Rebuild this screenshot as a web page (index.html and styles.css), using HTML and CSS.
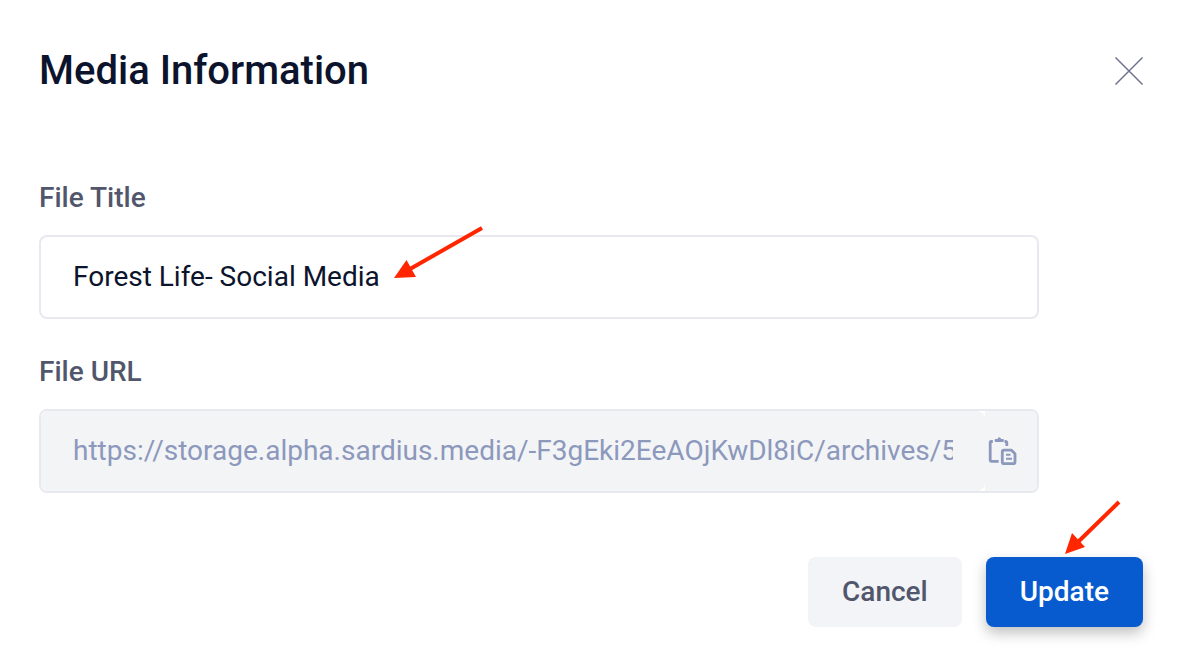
FILE: index.html
```html
<!DOCTYPE html>
<html lang="en">
<head>
    <meta charset="UTF-8">
    <meta name="viewport" content="width=device-width, initial-scale=1.0">
    <title>Media Information</title>
    <link rel="stylesheet" href="styles.css">
</head>
<body>
    <div class="modal">
        <header class="modal-header">
            <h1>Media Information</h1>
            <button class="close-btn" type="button" aria-label="Close">
                <svg width="30" height="30" viewBox="0 0 30 30">
                    <path d="M1.5 1.5l27 27M28.5 1.5l-27 27" />
                </svg>
            </button>
        </header>

        <form class="modal-form">
            <div class="field">
                <label for="fileTitle">File Title</label>
                <div class="input-box">
                    <input type="text" id="fileTitle" value="Forest Life- Social Media">
                    <svg class="arrow arrow-title" width="92" height="54" viewBox="0 0 92 54">
                        <path class="shaft" d="M90 2L18 43" />
                        <path class="head" d="M2 52l12.500-18 9.500 17z" />
                    </svg>
                </div>
            </div>

            <div class="field">
                <label for="fileUrl">File URL</label>
                <div class="input-box">
                    <input type="text" id="fileUrl" value="https://storage.alpha.sardius.media/-F3gEki2EeAOjKwDl8iC/archives/5" disabled>
                    <button class="copy-btn" type="button" aria-label="Copy URL">
                        <svg width="30" height="30" viewBox="0 0 30 30">
                            <path class="line" d="M4.800 5.500H3.200q-1 0-1 1v17.800q0 1 1 1h7.500" />
                            <path class="line" d="M16.500 5.500h.8q1.500 0 1.500 1.500v3" />
                            <path class="solid" d="M7.500 3h2q.2-1.800 1.700-1.800T13 3h2q.8 0 .8.800v1.400q0 .8-.8.800H7.500q-.8 0-.8-.8V3.800q0-.8.8-.8z" />
                            <path class="line" d="M16 14.200h7.500l3.500 3.500v8.300q0 1.700-1.700 1.700H16q-1.700 0-1.700-1.700V15.900q0-1.700 1.700-1.700z" />
                            <path class="line thin" d="M18 18.700h4.500M18 22.700h6" />
                        </svg>
                    </button>
                </div>
            </div>

            <div class="actions">
                <button class="btn cancel-btn" type="button">Cancel</button>
                <button class="btn update-btn" type="submit">
                    Update
                    <svg class="arrow arrow-update" width="58" height="56" viewBox="0 0 58 56">
                        <path class="shaft" d="M55 2L14 42" />
                        <path class="head" d="M1 54l7-21 13 14z" />
                    </svg>
                </button>
            </div>
        </form>
    </div>
</body>
</html>
```

FILE: styles.css
```css
* {
    box-sizing: border-box;
    margin: 0;
    padding: 0;
}

body {
    font-family: Roboto, sans-serif;
    font-size: 28px;
    line-height: 32px;
    color: #0c132c;
    background-color: #fff;
}

.modal {
    padding: 47px 43px 24px 39px;
}

.modal-header {
    display: flex;
    justify-content: space-between;
    align-items: center;
    margin-bottom: 87px;
}

h1 {
    font-size: 40px;
    line-height: 48px;
    font-weight: 500;
}

button {
    border: none;
    font-family: inherit;
    cursor: pointer;
}

button svg {
    display: block;
}

.close-btn {
    background: none;
    margin-right: -1px;
}

.close-btn path {
    stroke: #70738f;
    stroke-width: 1.5;
}

.modal-form {
    display: flex;
    flex-direction: column;
    gap: 37px;
}

.field {
    display: flex;
    flex-direction: column;
    gap: 21px;
    max-width: 1000px;
}

label {
    color: #51566c;
    font-weight: 500;
}

.input-box {
    position: relative;
    display: flex;
    height: 84px;
    border: 2px solid #e8e9ef;
    border-radius: 8px;
}

input {
    flex: 1;
    min-width: 0;
    padding: 0 32px 2px;
    border: none;
    border-radius: 8px;
    outline: none;
    background-color: #fff;
    color: inherit;
    font-family: inherit;
    font-size: 28px;
}

input:disabled {
    background-color: #f3f4f6;
    color: #8c98bc;
}

.copy-btn {
    display: flex;
    align-items: center;
    justify-content: center;
    width: 52px;
    padding-right: 18px;
    padding-left: 2px;
    background-color: #f3f4f6;
    border-radius: 0 6px 6px 0;
}

.copy-btn svg {
    flex-shrink: 0;
}

.copy-btn .line {
    fill: none;
    stroke: #8c98bc;
    stroke-width: 2.8;
    stroke-linejoin: round;
}

.copy-btn .thin {
    stroke-width: 2;
}

.copy-btn .solid {
    fill: #8c98bc;
}

.actions {
    display: flex;
    justify-content: flex-end;
    gap: 24px;
    margin-top: 27px;
}

.btn {
    position: relative;
    height: 70px;
    padding: 0 34px 2px;
    border-radius: 8px;
    font-size: 28px;
    font-weight: 500;
}

.cancel-btn {
    background-color: #f3f4f8;
    color: #51566c;
}

.update-btn {
    background-color: #085bce;
    color: #fff;
    box-shadow: 0 6px 14px rgba(0, 0, 0, 0.25);
}

/* Pointer arrows */
.arrow {
    position: absolute;
    pointer-events: none;
}

.arrow .shaft {
    stroke: #ff2600;
    stroke-width: 4;
}

.arrow .head {
    fill: #ff2600;
}

.arrow-title {
    top: -11px;
    left: 351px;
}

.arrow-update {
    top: -57px;
    left: 78px;
}
```
